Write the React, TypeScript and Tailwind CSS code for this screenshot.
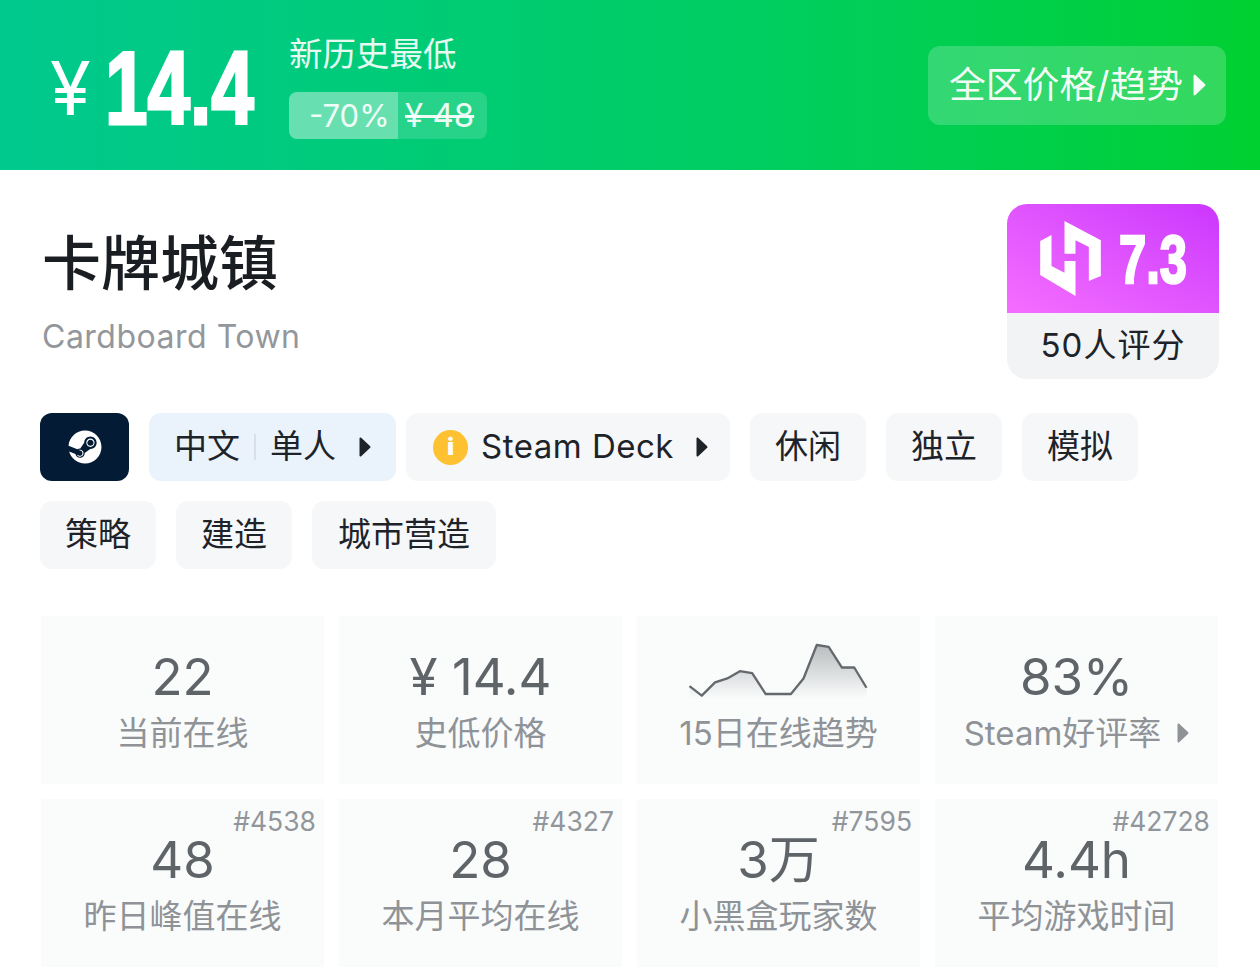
import { FaSteam } from "react-icons/fa";

const cjk = "font-['Inter','Noto_Sans_CJK_SC',sans-serif]";

function Caret({ className }: { className: string }) {
  return (
    <svg viewBox="0 0 12 20" className={className} fill="currentColor">
      <path d="M0.5 1.5v17a1 1 0 0 0 1.7.8l9-8.5a1.2 1.2 0 0 0 0-1.6L2.2.7A1 1 0 0 0 .5 1.5z" />
    </svg>
  );
}

function Tag({ label }: { label: string }) {
  return (
    <div className="flex h-[68px] items-center rounded-xl bg-[#f5f7f9] px-[25px] text-[33px] text-[#1e2329]">
      {label}
    </div>
  );
}

function Stat({ value, label, rank, caret }: { value: string; label: string; rank?: string; caret?: boolean }) {
  return (
    <div className="relative flex h-[168px] flex-col items-center bg-[#fafcfc] pt-[26px]">
      {rank && <span className="absolute top-[6px] right-[8px] text-[26.5px] leading-[32px] text-[#92969b]">{rank}</span>}
      <div className="text-[51px] leading-[70px] text-[#5f6468]">{value}</div>
      <div className="flex items-center text-[33px] leading-[42px] text-[#8f9397]">
        {label}
        {caret && <Caret className="ml-[16px] h-[20px] w-[12px]" />}
      </div>
    </div>
  );
}

function Sparkline() {
  const line = "178,228 215,257 255,217 292,205 330,183 367,189 408,252 484,252 522,205 562,104 598,110 638,172 675,172 712,233";
  return (
    <svg viewBox="170 95 550 175" className="-ml-[2px] h-[58px] w-[184px]">
      <defs>
        <linearGradient id="spark" x1="0" y1="0" x2="0" y2="1">
          <stop offset="0" stopColor="#b9bcbe" />
          <stop offset="1" stopColor="#fafcfc" />
        </linearGradient>
      </defs>
      <polygon points={`${line} 712,266 178,266`} fill="url(#spark)" />
      <polyline points={line} fill="none" stroke="#65696d" strokeWidth="7" strokeLinejoin="round" />
    </svg>
  );
}

export default function App() {
  return (
    <div className={`h-[974px] w-[1260px] overflow-hidden bg-white ${cjk}`}>
      <header className="flex h-[170px] items-center bg-gradient-to-r from-[#00c98e] to-[#00d030] pr-[34px] pl-[50px] text-white">
        <div className="flex w-[239px] items-center pt-[6px]">
          <span className="text-[74px] leading-none font-normal">¥</span>
          <span className="ml-[14px] origin-left scale-x-[0.735] font-['Liberation_Sans',sans-serif] text-[104px] leading-none font-bold [-webkit-text-stroke:3px_white]">
            14.4
          </span>
        </div>
        <div className="flex flex-col gap-[18px] pt-[3px]">
          <div className="text-[33.5px] leading-[40px] text-white/90">新历史最低</div>
          <div className="flex h-[47px] w-[198px] overflow-hidden rounded-lg bg-white/15 text-[31px] leading-[47px] text-white/90">
            <span className="w-[109px] bg-white/30 pl-[20px]">-70%</span>
            <span className="pl-[7px] text-[33px] line-through">¥ 48</span>
          </div>
        </div>
        <button className="ml-auto flex h-[79px] w-[298px] items-center rounded-xl bg-white/20 pl-[21px] text-[36.8px] text-white/95">
          全区价格/趋势
          <Caret className="ml-[10px] h-[24px] w-[13px]" />
        </button>
      </header>

      <section className="flex justify-between pt-[34px] pr-[41px] pl-[42px]">
        <div className="pt-[20px]">
          <h1 className="text-[59px] leading-[80px] font-medium text-[#1a1e23]">卡牌城镇</h1>
          <div className="mt-[11px] text-[32px] leading-[44px] tracking-[0.5px] text-[#93979c]">Cardboard Town</div>
        </div>
        <div className="w-[212px] overflow-hidden rounded-[20px] bg-[#f2f3f5]">
          <div className="flex h-[109px] items-center justify-center gap-[18px] bg-gradient-to-tr from-[#f56dff] to-[#cb35fd] text-white">
            <svg viewBox="34 30 182 225" className="h-[75px] w-[61px]" fill="currentColor">
              <polygon points="68,72 34,90 34,192 140,255 140,150 107,150 107,185 68,165" />
              <polygon points="107,30 216,88 216,195 180,210 180,108 140,88 140,128 107,128" />
            </svg>
            <span className="w-[68px] origin-left scale-x-[0.72] font-['Liberation_Sans',sans-serif] text-[68px] leading-none font-bold whitespace-nowrap [-webkit-text-stroke:2.5px_white]">
              7.3
            </span>
          </div>
          <div className="flex h-[66px] items-center justify-center text-[33px] tracking-[1px] text-[#1e2329]">50人评分</div>
        </div>
      </section>

      <section className="mt-[34px] flex flex-wrap gap-y-[20px] px-[40px]">
        <div className="mr-[20px] flex h-[68px] w-[89px] items-center justify-center rounded-xl bg-[#041b35] text-white">
          <FaSteam size={34} />
        </div>
        <div className="mr-[10px] flex h-[68px] w-[247px] items-center rounded-xl bg-[#eaf3fc] pl-[25px] text-[33px] text-[#1e2329]">
          中文
          <span className="mx-[14px] h-[26px] w-[2px] bg-[#d9dfe5]" />
          单人
          <Caret className="ml-[23px] h-[20px] w-[12px]" />
        </div>
        <div className="mr-[20px] flex h-[68px] w-[324px] items-center rounded-xl bg-[#f5f7f9] pl-[27px] text-[33px] text-[#1e2329]">
          <span className="flex h-[35px] w-[35px] items-center justify-center rounded-full bg-[#fdc132] text-[24px] font-black text-white">
            i
          </span>
          <span className="ml-[13px] tracking-[0.5px]">Steam Deck</span>
          <Caret className="ml-[22px] h-[20px] w-[12px]" />
        </div>
        <div className="flex flex-wrap gap-x-[20px]">
          <Tag label="休闲" />
          <Tag label="独立" />
          <Tag label="模拟" />
        </div>
        <div className="flex w-full gap-x-[20px]">
          <Tag label="策略" />
          <Tag label="建造" />
          <div className="flex h-[68px] w-[184px] items-center justify-center rounded-xl bg-[#f5f7f9] text-[33px] text-[#1e2329]">
            城市营造
          </div>
        </div>
      </section>

      <section className="mt-[47px] grid grid-cols-4 gap-[15px] pr-[42px] pl-[41px]">
        <Stat value="22" label="当前在线" />
        <Stat value="¥ 14.4" label="史低价格" />
        <div className="flex h-[168px] flex-col items-center bg-[#fafcfc] pt-[26px]">
          <Sparkline />
          <div className="mt-[12px] text-[33px] leading-[42px] text-[#8f9397]">15日在线趋势</div>
        </div>
        <Stat value="83%" label="Steam好评率" caret />
        <Stat value="48" label="昨日峰值在线" rank="#4538" />
        <Stat value="28" label="本月平均在线" rank="#4327" />
        <Stat value="3万" label="小黑盒玩家数" rank="#7595" />
        <Stat value="4.4h" label="平均游戏时间" rank="#42728" />
      </section>
    </div>
  );
}
